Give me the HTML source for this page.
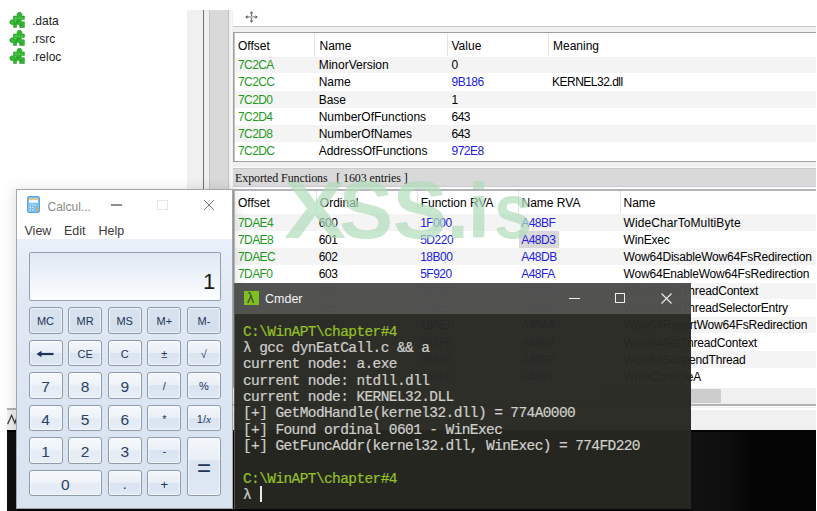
<!DOCTYPE html><html><head><meta charset="utf-8"><style>
*{margin:0;padding:0;box-sizing:border-box}
html,body{width:817px;height:511px;overflow:hidden;background:#fff;position:relative;font-family:"Liberation Sans",sans-serif;font-size:12px;color:#000}
.a{position:absolute}
.t{position:absolute;white-space:nowrap;line-height:14px}
.g{color:#1e9a1e;letter-spacing:-0.6px}
.b{color:#2222dd;letter-spacing:-0.5px}
.n{letter-spacing:-0.5px}
.mono{font-family:"Liberation Mono",monospace}
.bt{position:absolute;border:1px solid #8e9bad;border-radius:3px;text-align:center;color:#1e3456;box-shadow:inset 0 0 0 1px rgba(255,255,255,0.55)}
.bm{background:linear-gradient(#d9e3f0,#d3deec)}
.bn{background:linear-gradient(#f4f7fb 0%,#e9eff7 48%,#dae4f0 50%,#dfe8f3 100%)}
.bd{background:linear-gradient(#f6f9fc 0%,#eef3f9 45%,#e4ebf4 55%,#e9eff7 100%)}
</style></head><body>
<svg class="a" style="left:9px;top:11.5px" width="17" height="17" viewBox="0 0 17 17">
<path d="M4.5 4H8.3C7.6 2.8 8 0.3 10.5 0.3C13 0.3 13.4 2.8 12.7 4H15.4V7.4H12.9C12.2 8 12.2 9.2 12.9 9.8H15.4V15.5H10.7V13C10 12.4 8.3 12.4 7.6 13V15.5H4.5V12.5C2.5 13 0.7 12 0.7 10.2C0.7 8.4 2.5 7.4 4.5 8Z" fill="#2fb52f" stroke="#1d8f1d" stroke-width="0.5"/>
<path d="M6 6h2M10 5.5v1.5M12 6.2h1.5M6.5 8v1M3 10h1" stroke="#8fe08f" stroke-width="0.8"/>
<path d="M8 10.5l2-2M6 12.5l1-1M11 12.5l1.5 1" stroke="#157015" stroke-width="0.8"/>
</svg>
<div class="t" style="left:32px;top:14px;font-size:12px;color:#222">.data</div>
<svg class="a" style="left:9px;top:29.5px" width="17" height="17" viewBox="0 0 17 17">
<path d="M4.5 4H8.3C7.6 2.8 8 0.3 10.5 0.3C13 0.3 13.4 2.8 12.7 4H15.4V7.4H12.9C12.2 8 12.2 9.2 12.9 9.8H15.4V15.5H10.7V13C10 12.4 8.3 12.4 7.6 13V15.5H4.5V12.5C2.5 13 0.7 12 0.7 10.2C0.7 8.4 2.5 7.4 4.5 8Z" fill="#2fb52f" stroke="#1d8f1d" stroke-width="0.5"/>
<path d="M6 6h2M10 5.5v1.5M12 6.2h1.5M6.5 8v1M3 10h1" stroke="#8fe08f" stroke-width="0.8"/>
<path d="M8 10.5l2-2M6 12.5l1-1M11 12.5l1.5 1" stroke="#157015" stroke-width="0.8"/>
</svg>
<div class="t" style="left:32px;top:32px;font-size:12px;color:#222">.rsrc</div>
<svg class="a" style="left:9px;top:47.5px" width="17" height="17" viewBox="0 0 17 17">
<path d="M4.5 4H8.3C7.6 2.8 8 0.3 10.5 0.3C13 0.3 13.4 2.8 12.7 4H15.4V7.4H12.9C12.2 8 12.2 9.2 12.9 9.8H15.4V15.5H10.7V13C10 12.4 8.3 12.4 7.6 13V15.5H4.5V12.5C2.5 13 0.7 12 0.7 10.2C0.7 8.4 2.5 7.4 4.5 8Z" fill="#2fb52f" stroke="#1d8f1d" stroke-width="0.5"/>
<path d="M6 6h2M10 5.5v1.5M12 6.2h1.5M6.5 8v1M3 10h1" stroke="#8fe08f" stroke-width="0.8"/>
<path d="M8 10.5l2-2M6 12.5l1-1M11 12.5l1.5 1" stroke="#157015" stroke-width="0.8"/>
</svg>
<div class="t" style="left:32px;top:50px;font-size:12px;color:#222">.reloc</div>
<div class="a" style="left:7px;top:408px;width:226px;height:2px;background:#b0b0b0"></div>
<div class="a" style="left:7px;top:410px;width:809px;height:20px;background:#f0f0f0"></div>
<svg class="a" style="left:0;top:400px" width="24" height="36" viewBox="0 400 24 36"><path d="M7.6 424.3L11.6 415.3L14.9 423.2L17.2 416.2" fill="none" stroke="#3a3a3a" stroke-width="1.3"/></svg>
<div class="a" style="left:7px;top:430px;width:809px;height:81px;background:#050505"></div>
<div class="a" style="left:690px;top:432px;width:60px;height:79px;background:linear-gradient(90deg,#111 0%,#0e0e0e 60%,#050505 100%)"></div>
<div class="a" style="left:7px;top:432px;width:10px;height:79px;background:#0f0f0f"></div>
<div class="a" style="left:187px;top:10px;width:16px;height:398px;background:#f0f0f0"></div>
<div class="a" style="left:203px;top:10px;width:1px;height:398px;background:#707070"></div>
<div class="a" style="left:204px;top:10px;width:5px;height:398px;background:#f0f0f0"></div>
<div class="a" style="left:209px;top:10px;width:20px;height:398px;background:#d9d9d9;border-left:1px solid #c4c4c4;border-right:1px solid #c4c4c4"></div>
<div class="a" style="left:229px;top:10px;width:4px;height:398px;background:#f0f0f0"></div>
<div class="a" style="left:231px;top:10px;width:1px;height:398px;background:#fafafa"></div>
<div class="a" style="left:233px;top:26px;width:583px;height:382px;background:#f0f0f0"></div>
<div class="a" style="left:233px;top:26px;width:583px;height:1px;background:#c8c8c8"></div>
<svg class="a" style="left:244.5px;top:11px" width="13" height="12" viewBox="0 0 13 12">
<path d="M6.5 0.2L8.3 2.6H4.7zM6.5 11.8L8.3 9.4H4.7zM0.2 6L2.6 4.2V7.8zM12.8 6L10.4 4.2V7.8z" fill="#505050"/>
<path d="M6.5 2.5v7M2.5 6h8" stroke="#6a6a6a" stroke-width="1.2"/><rect x="5.6" y="5.1" width="1.8" height="1.8" fill="#fff" opacity="0.6"/></svg>
<div class="a" style="left:233px;top:32px;width:583px;height:130px;background:#fff;border:1px solid #a0a0a0;border-right:none"></div>
<div class="t" style="left:238px;top:38.5px">Offset</div>
<div class="t" style="left:319.5px;top:38.5px">Name</div>
<div class="t" style="left:451.5px;top:38.5px">Value</div>
<div class="t" style="left:553px;top:38.5px">Meaning</div>
<div class="a" style="left:314px;top:34px;width:1px;height:22px;background:#e3e3e3"></div>
<div class="a" style="left:447px;top:34px;width:1px;height:22px;background:#e3e3e3"></div>
<div class="a" style="left:548px;top:34px;width:1px;height:22px;background:#e3e3e3"></div>
<div class="a" style="left:235px;top:56.7px;width:581px;height:16.5px;background:#f4f4f4"></div>
<div class="t g" style="left:238px;top:58.2px">7C2CA</div>
<div class="t" style="left:318.7px;top:58.2px">MinorVersion</div>
<div class="t n" style="left:451.5px;top:58.2px">0</div>
<div class="t g" style="left:238px;top:75.35px">7C2CC</div>
<div class="t" style="left:318.7px;top:75.35px">Name</div>
<div class="t b" style="left:451.5px;top:75.35px">9B186</div>
<div class="t" style="left:552px;top:75.35px;letter-spacing:-0.5px">KERNEL32.dll</div>
<div class="a" style="left:235px;top:91.0px;width:581px;height:16.5px;background:#f4f4f4"></div>
<div class="t g" style="left:238px;top:92.5px">7C2D0</div>
<div class="t" style="left:318.7px;top:92.5px">Base</div>
<div class="t n" style="left:451.5px;top:92.5px">1</div>
<div class="t g" style="left:238px;top:109.65px">7C2D4</div>
<div class="t" style="left:318.7px;top:109.65px">NumberOfFunctions</div>
<div class="t n" style="left:451.5px;top:109.65px">643</div>
<div class="a" style="left:235px;top:125.3px;width:581px;height:16.5px;background:#f4f4f4"></div>
<div class="t g" style="left:238px;top:126.8px">7C2D8</div>
<div class="t" style="left:318.7px;top:126.8px">NumberOfNames</div>
<div class="t n" style="left:451.5px;top:126.8px">643</div>
<div class="t g" style="left:238px;top:143.95px">7C2DC</div>
<div class="t" style="left:318.7px;top:143.95px">AddressOfFunctions</div>
<div class="t b" style="left:451.5px;top:143.95px">972E8</div>
<div class="a" style="left:233px;top:167px;width:583px;height:1px;background:#fcfcfc"></div>
<div class="a" style="left:233px;top:168px;width:583px;height:19px;background:#d9d9d9;border-top:1px solid #c9c9c9;border-bottom:1px solid #c9c9c9"></div>
<div class="a" style="left:233px;top:187px;width:583px;height:2px;background:#fcfcfc"></div>
<div class="t" style="left:235px;top:170.5px;font-family:'Liberation Serif',serif;font-size:12px;letter-spacing:-0.1px;color:#111">Exported Functions &nbsp; [ 1603 entries ]</div>
<div class="a" style="left:233px;top:189px;width:583px;height:199px;background:#fff;border-top:2px solid #b2b2b8;border-left:1px solid #a0a0a0"></div>
<div class="a" style="left:234px;top:191px;width:1px;height:197px;background:#c4c4c4"></div>
<div class="a" style="left:234px;top:33px;width:1px;height:128px;background:#c4c4c4"></div>
<div class="a" style="left:316px;top:191px;width:1px;height:22px;background:#e3e3e3"></div>
<div class="a" style="left:417px;top:191px;width:1px;height:22px;background:#e3e3e3"></div>
<div class="a" style="left:518px;top:191px;width:1px;height:22px;background:#e3e3e3"></div>
<div class="a" style="left:620px;top:191px;width:1px;height:22px;background:#e3e3e3"></div>
<div class="t" style="left:238px;top:195.5px">Offset</div>
<div class="t" style="left:319.8px;top:195.5px">Ordinal</div>
<div class="t" style="left:420.7px;top:195.5px">Function RVA</div>
<div class="t" style="left:521.5px;top:195.5px">Name RVA</div>
<div class="t" style="left:623.5px;top:195.5px">Name</div>
<div class="a" style="left:235px;top:214.0px;width:581px;height:16.5px;background:#f4f4f4"></div>
<div class="t g" style="left:238px;top:215.5px">7DAE4</div>
<div class="t n" style="left:318.8px;top:215.5px">600</div>
<div class="t b" style="left:420.2px;top:215.5px">1F000</div>
<div class="t b" style="left:521.2px;top:215.5px">A48BF</div>
<div class="t" style="left:623.5px;top:215.5px;letter-spacing:0.1px">WideCharToMultiByte</div>
<div class="a" style="left:518.8px;top:231.15px;width:40px;height:17.15px;background:#d9d9d9"></div>
<div class="t g" style="left:238px;top:232.65px">7DAE8</div>
<div class="t n" style="left:318.8px;top:232.65px">601</div>
<div class="t b" style="left:420.2px;top:232.65px">5D220</div>
<div class="t b" style="left:521.2px;top:232.65px">A48D3</div>
<div class="t" style="left:623.5px;top:232.65px;letter-spacing:-0.18px">WinExec</div>
<div class="a" style="left:235px;top:248.3px;width:581px;height:16.5px;background:#f4f4f4"></div>
<div class="t g" style="left:238px;top:249.8px">7DAEC</div>
<div class="t n" style="left:318.8px;top:249.8px">602</div>
<div class="t b" style="left:420.2px;top:249.8px">18B00</div>
<div class="t b" style="left:521.2px;top:249.8px">A48DB</div>
<div class="t" style="left:623.5px;top:249.8px;letter-spacing:-0.18px">Wow64DisableWow64FsRedirection</div>
<div class="t g" style="left:238px;top:266.95px">7DAF0</div>
<div class="t n" style="left:318.8px;top:266.95px">603</div>
<div class="t b" style="left:420.2px;top:266.95px">5F920</div>
<div class="t b" style="left:521.2px;top:266.95px">A48FA</div>
<div class="t" style="left:623.5px;top:266.95px;letter-spacing:-0.18px">Wow64EnableWow64FsRedirection</div>
<div class="a" style="left:235px;top:282.6px;width:581px;height:16.5px;background:#f4f4f4"></div>
<div class="t n" style="left:318.8px;top:284.1px">604</div>
<div class="t b" style="left:420.2px;top:284.1px">3B2B0</div>
<div class="t b" style="left:521.2px;top:284.1px">A4918</div>
<div class="t" style="left:623.5px;top:284.1px;letter-spacing:-0.18px">Wow64GetThreadContext</div>
<div class="t n" style="left:318.8px;top:301.25px">605</div>
<div class="t b" style="left:420.2px;top:301.25px">31BE0</div>
<div class="t b" style="left:521.2px;top:301.25px">A492E</div>
<div class="t" style="left:623.5px;top:301.25px;letter-spacing:-0.18px">Wow64GetThreadSelectorEntry</div>
<div class="a" style="left:235px;top:316.9px;width:581px;height:16.5px;background:#f4f4f4"></div>
<div class="t n" style="left:318.8px;top:318.4px">606</div>
<div class="t b" style="left:420.2px;top:318.4px">18AE0</div>
<div class="t b" style="left:521.2px;top:318.4px">A494A</div>
<div class="t" style="left:623.5px;top:318.4px;letter-spacing:-0.18px">Wow64RevertWow64FsRedirection</div>
<div class="t n" style="left:318.8px;top:335.54999999999995px">607</div>
<div class="t b" style="left:420.2px;top:335.54999999999995px">362F0</div>
<div class="t b" style="left:521.2px;top:335.54999999999995px">A4968</div>
<div class="t" style="left:623.5px;top:335.54999999999995px;letter-spacing:-0.18px">Wow64SetThreadContext</div>
<div class="a" style="left:235px;top:351.2px;width:581px;height:16.5px;background:#f4f4f4"></div>
<div class="t n" style="left:318.8px;top:352.7px">608</div>
<div class="t b" style="left:420.2px;top:352.7px">36310</div>
<div class="t b" style="left:521.2px;top:352.7px">A497E</div>
<div class="t" style="left:623.5px;top:352.7px;letter-spacing:-0.18px">Wow64SuspendThread</div>
<div class="t n" style="left:318.8px;top:369.85px">609</div>
<div class="t b" style="left:420.2px;top:369.85px">243F0</div>
<div class="t b" style="left:521.2px;top:369.85px">A4991</div>
<div class="t" style="left:623.5px;top:369.85px;letter-spacing:-0.18px">WriteConsoleA</div>
<div class="a" style="left:234px;top:388px;width:582px;height:17px;background:#f0f0f0"></div>
<div class="a" style="left:600px;top:389px;width:121px;height:14px;background:#cdcdcd"></div>
<div class="a" style="left:233px;top:404px;width:583px;height:2px;background:#b2b2b2"></div>
<div class="a" style="left:233px;top:406px;width:583px;height:1px;background:#fcfcfc"></div>
<div class="a" style="left:0;top:0;width:817px;height:511px;opacity:0.7">
<div class="t" style="left:283.8px;top:164.5px;font-size:81px;line-height:90px;font-weight:bold;color:#b2ddbc;transform-origin:0 72px;transform:scaleX(1.15)">X</div>
<div class="t" style="left:339px;top:164.5px;font-size:81px;line-height:90px;font-weight:bold;color:#b2ddbc;transform-origin:0 72px;transform:none">S</div>
<div class="t" style="left:393px;top:164.5px;font-size:81px;line-height:90px;font-weight:bold;color:#b2ddbc;transform-origin:0 72px;transform:none">S</div>
<div class="t" style="left:446.6px;top:164.5px;font-size:81px;line-height:90px;font-weight:bold;color:#b2ddbc;transform-origin:0 72px;transform:none">.</div>
<div class="t" style="left:467.6px;top:164.5px;font-size:81px;line-height:90px;font-weight:bold;color:#b2ddbc;transform-origin:0 72px;transform:scaleY(0.97)">i</div>
<div class="t" style="left:494.25px;top:164.5px;font-size:81px;line-height:90px;font-weight:bold;color:#b2ddbc;transform-origin:0 72px;transform:scale(0.85,0.955)">s</div>
</div>
<div class="a" style="left:16px;top:189px;width:217px;height:320px;box-shadow:0 2px 12px 2px rgba(0,0,0,0.13)"></div>
<div class="a" style="left:16px;top:189px;width:217px;height:320px;background:#fff;border:1px solid #a4a6a9"></div>
<svg class="a" style="left:27px;top:196px" width="13" height="17" viewBox="0 0 13 17">
<rect x="0.5" y="0.5" width="12" height="16" rx="1.5" fill="#7cc0ee" stroke="#5aa6e0"/>
<rect x="2" y="2.2" width="9" height="1.6" fill="#f2c060"/>
<rect x="2" y="3.8" width="9" height="3" fill="#f4faff"/>
<path d="M2.5 8.5h1.5v1h-1.5zM5 8.5h1.5v1h-1.5zM7.5 8.5h1.5v1h-1.5zM2.5 11h1.5v1h-1.5zM5 11h1.5v1h-1.5zM2.5 13.5h1.5v1h-1.5zM5 13.5h1.5v1h-1.5z" fill="#d8ecfb"/>
<rect x="9.3" y="11" width="1.7" height="4" fill="#f0a040"/>
</svg>
<div class="t" style="left:47.5px;top:199.5px;font-size:12px;color:#8a8a8a">Calcul...</div>
<div class="a" style="left:111px;top:204.3px;width:11px;height:1.5px;background:#8e8e8e"></div>
<div class="a" style="left:157px;top:199.5px;width:11px;height:10.5px;border:1px solid #e6e6e6"></div>
<svg class="a" style="left:203px;top:198.5px" width="12" height="12" viewBox="0 0 12 12"><path d="M1 1L11 11M11 1L1 11" stroke="#7a7a7a" stroke-width="1"/></svg>
<div class="t" style="left:24.5px;top:224px;font-size:12.5px;color:#3a3a3a">View</div>
<div class="t" style="left:64px;top:224px;font-size:12.5px;color:#3a3a3a">Edit</div>
<div class="t" style="left:98.5px;top:224px;font-size:12.5px;color:#3a3a3a">Help</div>
<div class="a" style="left:17px;top:239px;width:215px;height:269px;background:linear-gradient(#eaf0f9,#dfe8f3 25%,#d8e3f0)"></div>
<div class="a" style="left:28.5px;top:252px;width:192.5px;height:49px;border:1px solid #94a1b2;border-radius:2px;background:linear-gradient(#dfe8f4,#eef3fa 50%,#fdfeff)"></div>
<div class="t" style="left:203px;top:271px;font-size:22px;line-height:22px;color:#1a1a1a">1</div>
<div class="bt bm" style="left:28.5px;top:307.2px;width:34px;height:26.5px;line-height:27.5px;font-size:11px;">MC</div>
<div class="bt bm" style="left:68.1px;top:307.2px;width:34px;height:26.5px;line-height:27.5px;font-size:11px;">MR</div>
<div class="bt bm" style="left:107.7px;top:307.2px;width:34px;height:26.5px;line-height:27.5px;font-size:11px;">MS</div>
<div class="bt bm" style="left:147.3px;top:307.2px;width:34px;height:26.5px;line-height:27.5px;font-size:11px;">M+</div>
<div class="bt bm" style="left:186.9px;top:307.2px;width:34px;height:26.5px;line-height:27.5px;font-size:11px;">M-</div>
<div class="bt bn" style="left:28.5px;top:339.7px;width:34px;height:26.5px;line-height:27.5px;font-size:11px;"></div>
<div class="bt bn" style="left:68.1px;top:339.7px;width:34px;height:26.5px;line-height:27.5px;font-size:11px;">CE</div>
<div class="bt bn" style="left:107.7px;top:339.7px;width:34px;height:26.5px;line-height:27.5px;font-size:11px;">C</div>
<div class="bt bn" style="left:147.3px;top:339.7px;width:34px;height:26.5px;line-height:27.5px;font-size:11px;">&plusmn;</div>
<div class="bt bn" style="left:186.9px;top:339.7px;width:34px;height:26.5px;line-height:27.5px;font-size:11px;">&radic;</div>
<svg class="a" style="left:36px;top:350px" width="18" height="8" viewBox="0 0 18 8"><path d="M2.5 4H17.5" stroke="#1e3456" stroke-width="2.2"/><path d="M0.5 4L5.5 0.8V7.2Z" fill="#1e3456"/></svg>
<div class="bt bd" style="left:28.5px;top:372.2px;width:34px;height:26.5px;line-height:27.5px;font-size:15.5px;color:#2a4164">7</div>
<div class="bt bd" style="left:68.1px;top:372.2px;width:34px;height:26.5px;line-height:27.5px;font-size:15.5px;color:#2a4164">8</div>
<div class="bt bd" style="left:107.7px;top:372.2px;width:34px;height:26.5px;line-height:27.5px;font-size:15.5px;color:#2a4164">9</div>
<div class="bt bn" style="left:147.3px;top:372.2px;width:34px;height:26.5px;line-height:27.5px;font-size:11px;">/</div>
<div class="bt bn" style="left:186.9px;top:372.2px;width:34px;height:26.5px;line-height:27.5px;font-size:11px;">%</div>
<div class="bt bd" style="left:28.5px;top:404.7px;width:34px;height:26.5px;line-height:27.5px;font-size:15.5px;color:#2a4164">4</div>
<div class="bt bd" style="left:68.1px;top:404.7px;width:34px;height:26.5px;line-height:27.5px;font-size:15.5px;color:#2a4164">5</div>
<div class="bt bd" style="left:107.7px;top:404.7px;width:34px;height:26.5px;line-height:27.5px;font-size:15.5px;color:#2a4164">6</div>
<div class="bt bn" style="left:147.3px;top:404.7px;width:34px;height:26.5px;line-height:27.5px;font-size:11px;">*</div>
<div class="bt bn" style="left:186.9px;top:404.7px;width:34px;height:26.5px;line-height:27.5px;font-size:11px;">1/<i style="font-family:Liberation Serif">x</i></div>
<div class="bt bd" style="left:28.5px;top:437.2px;width:34px;height:26.5px;line-height:27.5px;font-size:15.5px;color:#2a4164">1</div>
<div class="bt bd" style="left:68.1px;top:437.2px;width:34px;height:26.5px;line-height:27.5px;font-size:15.5px;color:#2a4164">2</div>
<div class="bt bd" style="left:107.7px;top:437.2px;width:34px;height:26.5px;line-height:27.5px;font-size:15.5px;color:#2a4164">3</div>
<div class="bt bn" style="left:147.3px;top:437.2px;width:34px;height:26.5px;line-height:27.5px;font-size:11px;">-</div>
<div class="bt bd" style="left:28.5px;top:469.7px;width:73.7px;height:26.5px;line-height:27.5px;font-size:15.5px;color:#2a4164">0</div>
<div class="bt bn" style="left:107.7px;top:469.7px;width:34px;height:26.5px;line-height:27.5px;font-size:14px;">.</div>
<div class="bt bn" style="left:147.3px;top:469.7px;width:34px;height:26.5px;line-height:27.5px;font-size:13px;">+</div>
<div class="bt bn" style="left:186.9px;top:437.2px;width:34px;height:59.0px;line-height:60.0px;font-size:24px;background:linear-gradient(#f4f7fb 0%,#e9eff7 38%,#dae4f0 40%,#dfe8f3 100%)">=</div>
<div class="a" style="left:233.5px;top:283px;width:457.5px;height:31px;background:rgba(79,79,77,0.985)"></div>
<div class="a" style="left:233.5px;top:314px;width:457.5px;height:195px;background:rgba(39,39,34,0.97)"></div>
<div class="a" style="left:233.5px;top:283px;width:1.5px;height:226px;background:rgba(90,90,88,0.9)"></div>
<div class="a" style="left:244px;top:291px;width:15px;height:14px;background:#7fbf22"></div>
<div class="t" style="left:247px;top:289.5px;font-size:14.5px;line-height:16px;color:#3a4a30">&lambda;</div>
<div class="t" style="left:265px;top:292px;font-size:12.5px;color:#f4f4f4">Cmder</div>
<div class="a" style="left:568.5px;top:298px;width:11px;height:1px;background:#eee"></div>
<div class="a" style="left:614.5px;top:293px;width:10.5px;height:10px;border:1px solid #eee"></div>
<svg class="a" style="left:661px;top:292.5px" width="11" height="11" viewBox="0 0 11 11"><path d="M0.5 0.5L10.5 10.5M10.5 0.5L0.5 10.5" stroke="#eee" stroke-width="1.1"/></svg>
<div class="t mono" style="left:243px;top:323.8px;font-size:14.5px;letter-spacing:-0.6px;line-height:16px;color:#93c027;-webkit-text-stroke:0.2px #93c027">C:\WinAPT\chapter#4</div>
<div class="t mono" style="left:243px;top:340.1px;font-size:14.5px;letter-spacing:-0.6px;line-height:16px;color:#cfcfcb;-webkit-text-stroke:0.2px #cfcfcb">&lambda; gcc dynEatCall.c &amp;&amp; a</div>
<div class="t mono" style="left:243px;top:356.40000000000003px;font-size:14.5px;letter-spacing:-0.6px;line-height:16px;color:#cfcfcb;-webkit-text-stroke:0.2px #cfcfcb">current node: a.exe</div>
<div class="t mono" style="left:243px;top:372.70000000000005px;font-size:14.5px;letter-spacing:-0.6px;line-height:16px;color:#cfcfcb;-webkit-text-stroke:0.2px #cfcfcb">current node: ntdll.dll</div>
<div class="t mono" style="left:243px;top:389.0px;font-size:14.5px;letter-spacing:-0.6px;line-height:16px;color:#cfcfcb;-webkit-text-stroke:0.2px #cfcfcb">current node: KERNEL32.DLL</div>
<div class="t mono" style="left:243px;top:405.3px;font-size:14.5px;letter-spacing:-0.6px;line-height:16px;color:#cfcfcb;-webkit-text-stroke:0.2px #cfcfcb">[+] GetModHandle(kernel32.dll) = 774A0000</div>
<div class="t mono" style="left:243px;top:421.6px;font-size:14.5px;letter-spacing:-0.6px;line-height:16px;color:#cfcfcb;-webkit-text-stroke:0.2px #cfcfcb">[+] Found ordinal 0601 - WinExec</div>
<div class="t mono" style="left:243px;top:437.90000000000003px;font-size:14.5px;letter-spacing:-0.6px;line-height:16px;color:#cfcfcb;-webkit-text-stroke:0.2px #cfcfcb">[+] GetFuncAddr(kernel32.dll, WinExec) = 774FD220</div>
<div class="t mono" style="left:243px;top:454.20000000000005px;font-size:14.5px;letter-spacing:-0.6px;line-height:16px;color:#cfcfcb;-webkit-text-stroke:0.2px #cfcfcb"></div>
<div class="t mono" style="left:243px;top:470.5px;font-size:14.5px;letter-spacing:-0.6px;line-height:16px;color:#93c027;-webkit-text-stroke:0.2px #93c027">C:\WinAPT\chapter#4</div>
<div class="t mono" style="left:243px;top:486.8px;font-size:14.5px;letter-spacing:-0.6px;line-height:16px;color:#cfcfcb;-webkit-text-stroke:0.2px #cfcfcb">&lambda; </div>
<div class="a" style="left:259.5px;top:485.5px;width:2.5px;height:16px;background:#e8e8e8"></div>
</body></html>
